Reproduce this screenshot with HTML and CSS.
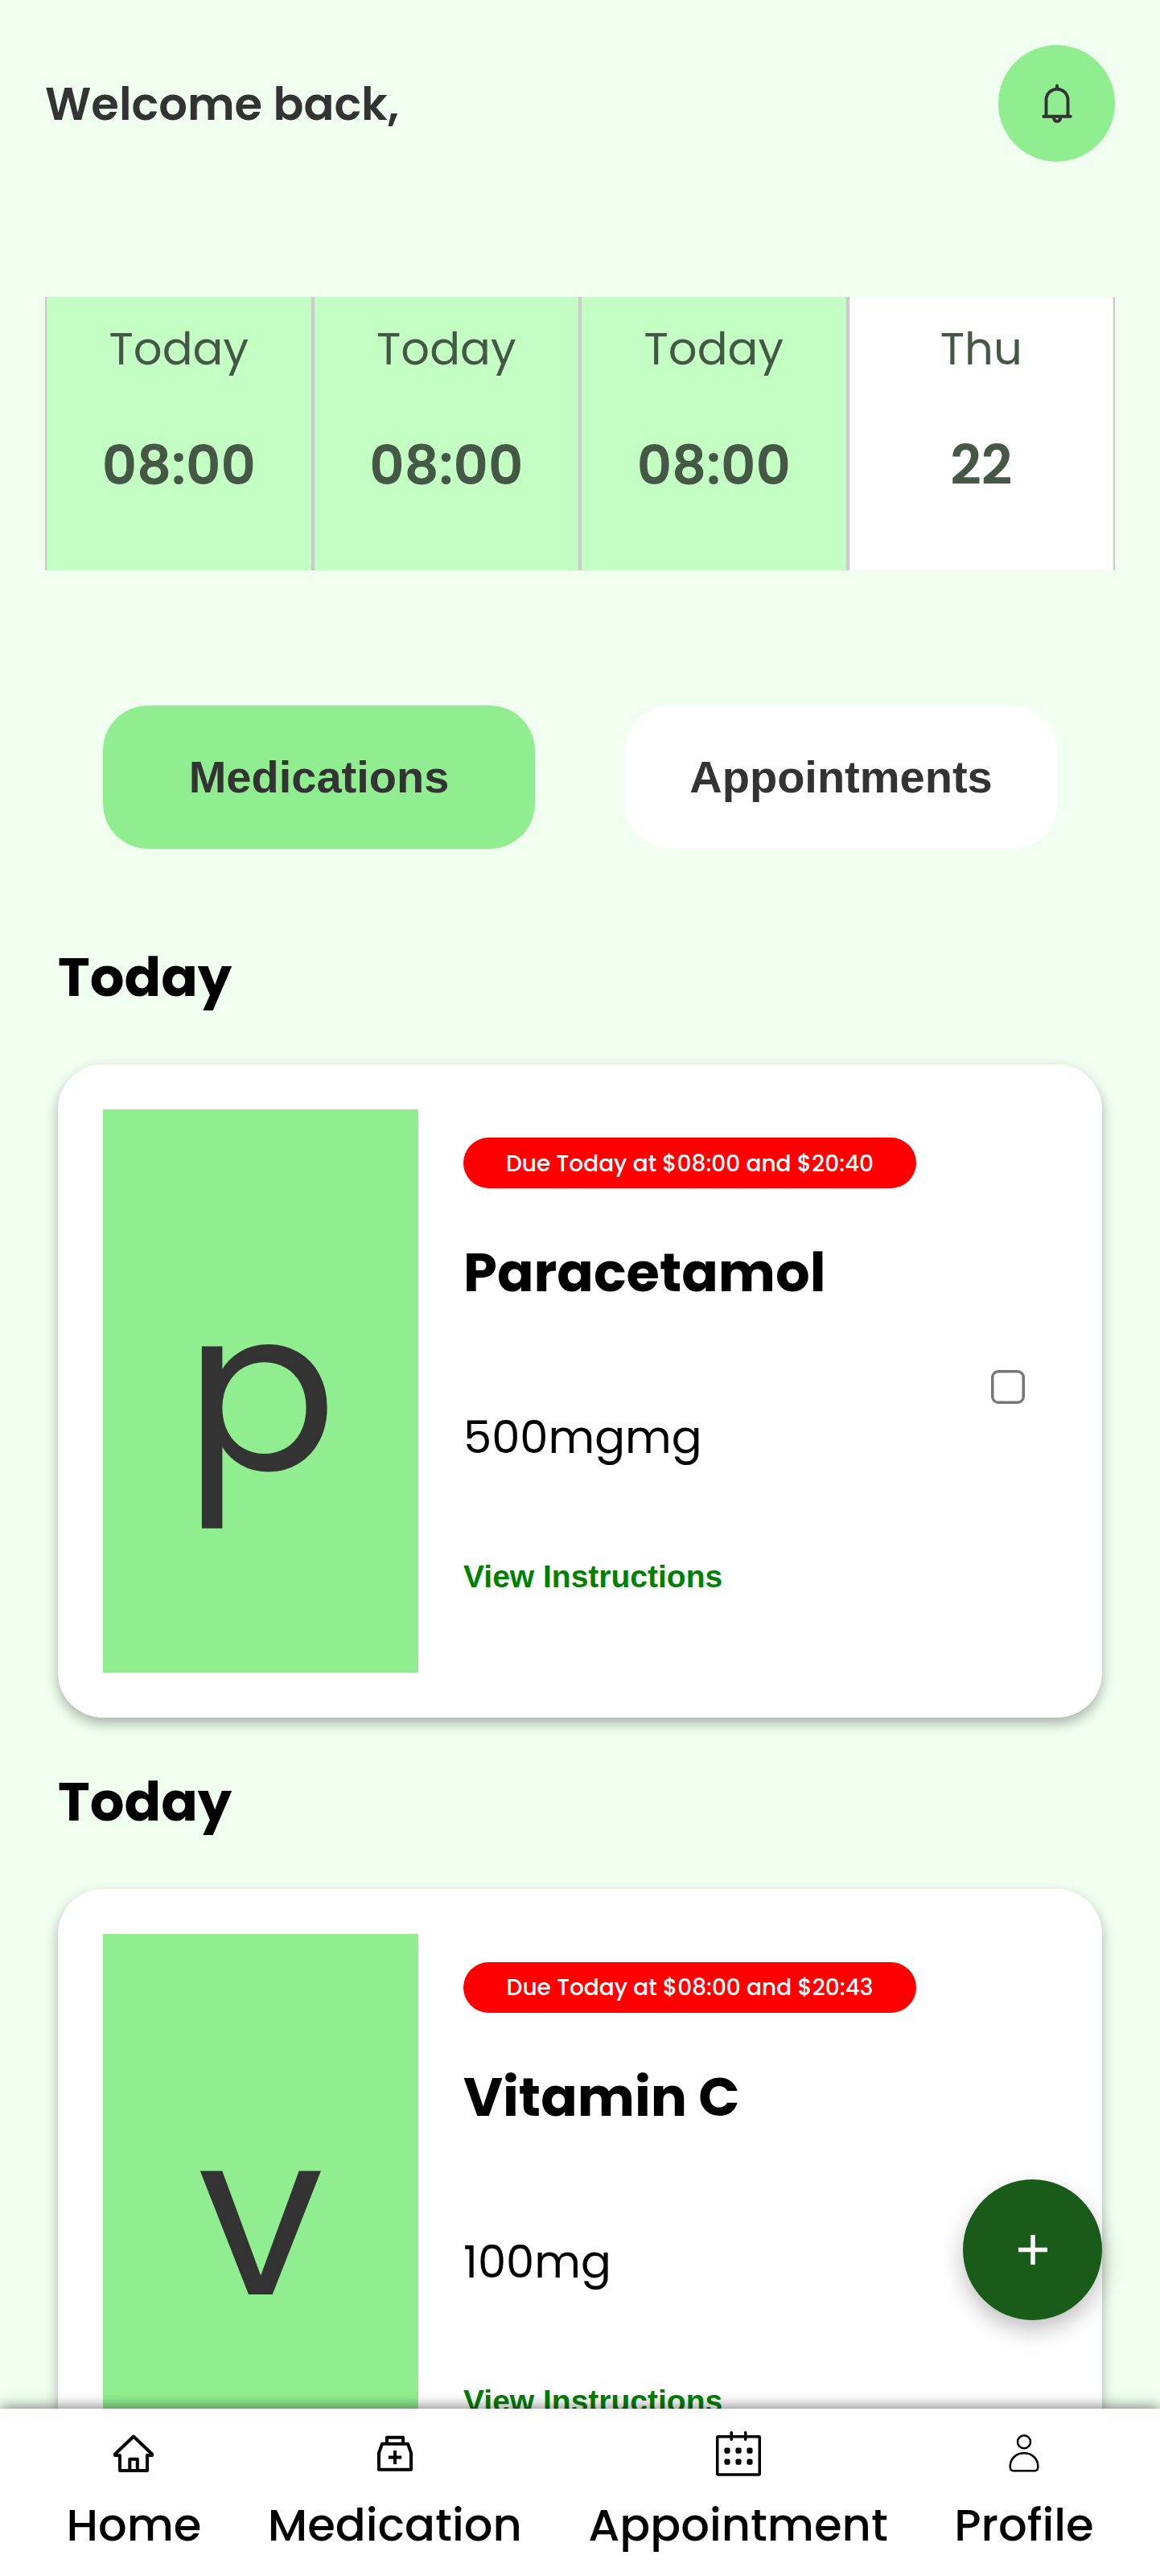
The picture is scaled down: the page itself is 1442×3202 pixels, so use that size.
FILE: index.html
```
<!DOCTYPE html>
<html lang="en">
<head>
<meta charset="utf-8">
<title>Medication reminders</title>
<link rel="stylesheet" href="styles.css">
</head>
<body>
<header class="header">
  <h1 class="welcome">Welcome back,</h1>
  <button class="bell" aria-label="Notifications">
    <svg width="56" height="56" viewBox="0 0 56 56" fill="none" stroke="#333" stroke-width="3.9" stroke-linecap="round" stroke-linejoin="round"><path d="M28 5.500v4M14.500 43V23.200a13.500 13.500 0 0 1 27 0V43M11.300 43.700h33.400M24 45.500a4.100 4.300 0 0 0 8.200 0"/></svg>
  </button>
</header>
<section class="strip">
  <div class="slot active"><span class="day">Today</span><span class="time">08:00</span></div>
  <div class="slot active"><span class="day">Today</span><span class="time">08:00</span></div>
  <div class="slot active"><span class="day">Today</span><span class="time">08:00</span></div>
  <div class="slot"><span class="day">Thu</span><span class="time">22</span></div>
</section>
<div class="tabs">
  <button class="tab selected">Medications</button>
  <button class="tab">Appointments</button>
</div>
<main class="list">
  <h2 class="heading">Today</h2>
  <article class="card">
    <div class="letter">p</div>
    <div class="info">
      <span class="badge">Due Today at $08:00 and $20:40</span>
      <h3 class="name">Paracetamol</h3>
      <p class="dose">500mgmg</p>
      <a class="link">View Instructions</a>
    </div>
    <span class="check"></span>
  </article>
  <h2 class="heading">Today</h2>
  <article class="card">
    <div class="letter">v</div>
    <div class="info">
      <span class="badge">Due Today at $08:00 and $20:43</span>
      <h3 class="name">Vitamin C</h3>
      <p class="dose">100mg</p>
      <a class="link">View Instructions</a>
    </div>
    <span class="check"></span>
  </article>
</main>
<button class="fab" aria-label="Add"><svg width="36" height="37" viewBox="0 0 36 37" stroke="#fff" stroke-width="5.5"><path d="M18 0v37M0 18.500h36"/></svg></button>
<nav class="nav">
  <a class="item"><svg width="56" height="56" viewBox="0 0 56 56" fill="none" stroke="#000" stroke-width="4" stroke-linejoin="round"><path d="M28 6.500 5 28.500V30h6v19h34V30h6v-1.500ZM23.300 49V34.700h9.500V49"/></svg><span>Home</span></a>
  <a class="item"><svg width="56" height="56" viewBox="0 0 56 56" fill="none" stroke="#000" stroke-width="4" stroke-linejoin="round"><path d="M12 15.700h32l4 11.500v20.500H8V27.200ZM18 15.700v-8h20v8M28 24v17M19.800 32.500h16.400"/></svg><span>Medication</span></a>
  <a class="item"><svg width="56" height="56" viewBox="0 0 56 56" fill="none" stroke="#000" stroke-width="3.500" stroke-linecap="round" stroke-linejoin="round"><rect x="1.750" y="6.800" width="52.500" height="47.200" rx="1"/><path d="M19.200 1.800v8.400M36.700 1.800v8.400"/><g fill="#000" stroke="none"><rect x="10.400" y="20.500" width="7.200" height="7.200" rx="2.200"/><rect x="24.400" y="20.500" width="7.200" height="7.200" rx="2.200"/><rect x="38.400" y="20.500" width="7.200" height="7.200" rx="2.200"/><rect x="10.400" y="34.500" width="7.200" height="7.200" rx="2.200"/><rect x="24.400" y="34.500" width="7.200" height="7.200" rx="2.200"/><rect x="38.400" y="34.500" width="7.200" height="7.200" rx="2.200"/></g></svg><span>Appointment</span></a>
  <a class="item"><svg width="56" height="56" viewBox="0 0 56 56" fill="none" stroke="#000" stroke-width="2.500"><circle cx="28" cy="13.300" r="8"/><path d="M28 27.300c-10 0-17.300 7-17.300 16.500 0 4 1 5.500 4 5.500h26.600c3 0 4-1.500 4-5.500 0-9.500-7.300-16.500-17.300-16.500Z"/></svg><span>Profile</span></a>
</nav>
</body>
</html>
```
FILE: styles.css
```
* { box-sizing: border-box; margin: 0; padding: 0; }
html, body { height: 3202px; overflow: hidden; }
body { background: #f0fff0; color: #000; font-family: Poppins, Inter, "Open Sans", sans-serif; }
button { border: 0; font: inherit; color: inherit; display: flex; align-items: center; justify-content: center; }
.header { display: flex; justify-content: space-between; align-items: center; padding: 56px 56px 0; height: 201px; }
.welcome { font-size: 56px; font-weight: 600; color: #333; white-space: nowrap; padding-top: 1px; }
.bell { width: 145px; height: 145px; border-radius: 50%; background: #90ee90; }
.strip { display: grid; grid-template-columns: repeat(4, 1fr); margin: 168px 56px 0; height: 340px; }
.slot { display: flex; flex-direction: column; align-items: center; background: #fff; box-shadow: inset 2.3px 0 #ccc, inset -2.3px 0 #ccc; padding-top: 32px; color: #455845; }
.active { background: #c4ffc4; }
.day { font-size: 56px; line-height: 66px; }
.time { font-size: 67.2px; line-height: 82px; font-weight: 600; margin-top: 71px; }
.tabs { display: flex; gap: 112px; margin: 168px 128px 0; }
.tab { flex: 1; height: 178px; border-radius: 56px; background: #fff; color: #333; font: bold 56px "Liberation Sans", Arial, sans-serif; padding-bottom: 2px; }
.selected { background: #90ee90; }
.list { padding: 0 72px; }
.heading { font-size: 67.2px; line-height: 80px; font-weight: 700; height: 80px; margin-top: 120px; }
.card { display: flex; height: 812px; margin-top: 68px; padding: 56px; border-radius: 56px; background: #fff; box-shadow: 0 7px 16px rgba(0,0,0,.3); }
.card + .heading { margin-top: 64.500px; }
.letter { width: 392px; height: 700px; background: #90ee90; color: #333; font-size: 280px; line-height: 700px; text-align: center; }
.info { display: flex; flex-direction: column; align-items: flex-start; padding: 35px 0 0 56px; width: 712px; }
.badge { display: flex; align-items: center; justify-content: center; width: 563px; height: 63px; border-radius: 32px; background: red; color: #fff; font-size: 28px; font-weight: 500; white-space: nowrap; padding-top: 2px; }
.name { font-size: 67.2px; line-height: 80px; font-weight: 700; margin-top: 65px; }
.dose { font-size: 56px; line-height: 68px; margin-top: 131px; }
.link { font: bold 39px/44px "Liberation Sans", Arial, sans-serif; color: green; margin-top: 117px; }
.check { width: 42px; height: 42px; border: 3.5px solid #767676; box-shadow: inset 0 0 0 .5px #767676; border-radius: 9px; margin: 324px 0 0; }
.fab { position: fixed; left: 1197px; top: 2709px; width: 173px; height: 175px; border-radius: 50%; background: #195c19; box-shadow: 0 12px 28px rgba(0,0,0,.25); }
.nav { position: fixed; left: 0; right: 0; bottom: 0; height: 208px; background: #fff; display: flex; justify-content: space-evenly; padding: 28px 0 0; box-shadow: 0 0 18px rgba(0,0,0,.6); }
.item { display: flex; flex-direction: column; align-items: center; font-size: 56px; line-height: 66px; font-weight: 500; gap: 28px; }
```
